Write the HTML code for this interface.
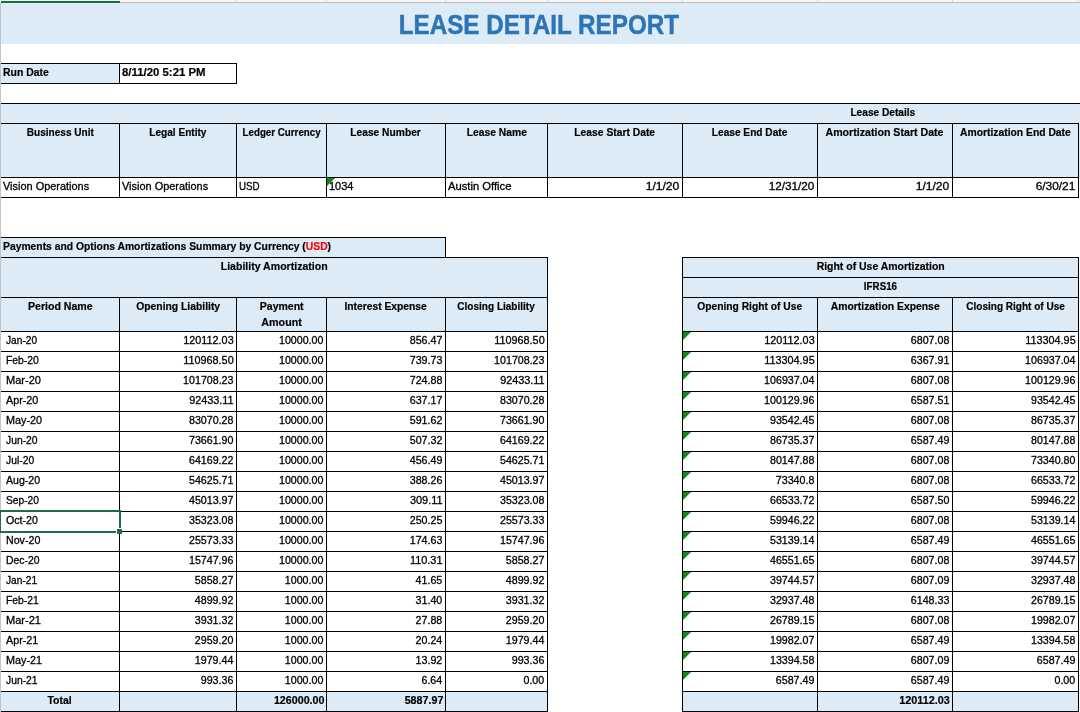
<!DOCTYPE html>
<html lang="en"><head><meta charset="utf-8"><title>Lease Detail Report</title>
<style>
html,body{margin:0;padding:0;background:#fff}
body{width:1080px;height:712px;overflow:hidden;position:relative;font-family:"Liberation Sans",sans-serif;font-size:10.9px;line-height:20px;color:#000}
.r{position:absolute}
#tx{position:absolute;left:0;top:0;width:1080px;height:712px;will-change:transform}
.t{position:absolute;height:20px;white-space:pre;overflow:visible;-webkit-text-stroke-width:0.3px}
.t.b{-webkit-text-stroke-width:0.2px}
.t span{display:inline-block}
.l{text-align:left}.l span{transform-origin:0 50%}
.c{text-align:center}.c span{transform-origin:50% 50%}
.g{text-align:right}.g span{transform-origin:100% 50%}
.b{font-weight:700}
.tri{position:absolute;width:0;height:0;border-top:8px solid #0f8a12;border-right:8px solid transparent}
</style></head><body>

<div class="r" style="left:0px;top:0px;width:1080px;height:3px;background:#f6f6f6"></div>
<div class="r" style="left:120px;top:2px;width:960px;height:1px;background:#bdbdbd"></div>
<div class="r" style="left:236px;top:0px;width:1px;height:2px;background:#d4d4d4"></div>
<div class="r" style="left:326px;top:0px;width:1px;height:2px;background:#d4d4d4"></div>
<div class="r" style="left:445px;top:0px;width:1px;height:2px;background:#d4d4d4"></div>
<div class="r" style="left:547px;top:0px;width:1px;height:2px;background:#d4d4d4"></div>
<div class="r" style="left:682px;top:0px;width:1px;height:2px;background:#d4d4d4"></div>
<div class="r" style="left:817px;top:0px;width:1px;height:2px;background:#d4d4d4"></div>
<div class="r" style="left:952px;top:0px;width:1px;height:2px;background:#d4d4d4"></div>
<div class="r" style="left:1078px;top:0px;width:1px;height:2px;background:#d4d4d4"></div>
<div class="r" style="left:1px;top:1px;width:119px;height:2px;background:#1f6b43"></div>
<div class="r" style="left:0px;top:3px;width:1px;height:709px;background:#c4c4c4"></div>
<div class="r" style="left:1px;top:3px;width:1079px;height:41px;background:#DDEBF7"></div>
<div class="r" style="left:1px;top:64px;width:118px;height:19px;background:#DDEBF7"></div>
<div class="r" style="left:1px;top:104px;width:1079px;height:73px;background:#DDEBF7"></div>
<div class="r" style="left:1px;top:238px;width:444px;height:19px;background:#DDEBF7"></div>
<div class="r" style="left:1px;top:258px;width:546px;height:73px;background:#DDEBF7"></div>
<div class="r" style="left:683px;top:258px;width:395px;height:73px;background:#DDEBF7"></div>
<div class="r" style="left:1px;top:692px;width:546px;height:19px;background:#DDEBF7"></div>
<div class="r" style="left:683px;top:692px;width:395px;height:19px;background:#DDEBF7"></div>
<div class="r" style="left:1px;top:63px;width:236px;height:1px;background:#000"></div>
<div class="r" style="left:1px;top:83px;width:236px;height:1px;background:#000"></div>
<div class="r" style="left:119px;top:63px;width:1px;height:21px;background:#000"></div>
<div class="r" style="left:236px;top:63px;width:1px;height:21px;background:#000"></div>
<div class="r" style="left:1px;top:103px;width:1079px;height:1px;background:#000"></div>
<div class="r" style="left:1px;top:123px;width:1078px;height:1px;background:#000"></div>
<div class="r" style="left:1px;top:177px;width:1078px;height:1px;background:#000"></div>
<div class="r" style="left:1px;top:197px;width:1078px;height:1px;background:#000"></div>
<div class="r" style="left:119px;top:123px;width:1px;height:75px;background:#000"></div>
<div class="r" style="left:236px;top:123px;width:1px;height:75px;background:#000"></div>
<div class="r" style="left:326px;top:123px;width:1px;height:75px;background:#000"></div>
<div class="r" style="left:445px;top:123px;width:1px;height:75px;background:#000"></div>
<div class="r" style="left:547px;top:123px;width:1px;height:75px;background:#000"></div>
<div class="r" style="left:682px;top:123px;width:1px;height:75px;background:#000"></div>
<div class="r" style="left:817px;top:123px;width:1px;height:75px;background:#000"></div>
<div class="r" style="left:952px;top:123px;width:1px;height:75px;background:#000"></div>
<div class="r" style="left:1078px;top:123px;width:1px;height:75px;background:#000"></div>
<div class="r" style="left:1px;top:237px;width:445px;height:1px;background:#000"></div>
<div class="r" style="left:445px;top:237px;width:1px;height:21px;background:#000"></div>
<div class="r" style="left:1px;top:257px;width:547px;height:1px;background:#000"></div>
<div class="r" style="left:547px;top:257px;width:1px;height:455px;background:#000"></div>
<div class="r" style="left:1px;top:297px;width:547px;height:1px;background:#000"></div>
<div class="r" style="left:1px;top:331px;width:547px;height:1px;background:#000"></div>
<div class="r" style="left:1px;top:351px;width:547px;height:1px;background:#000"></div>
<div class="r" style="left:1px;top:371px;width:547px;height:1px;background:#000"></div>
<div class="r" style="left:1px;top:391px;width:547px;height:1px;background:#000"></div>
<div class="r" style="left:1px;top:411px;width:547px;height:1px;background:#000"></div>
<div class="r" style="left:1px;top:431px;width:547px;height:1px;background:#000"></div>
<div class="r" style="left:1px;top:451px;width:547px;height:1px;background:#000"></div>
<div class="r" style="left:1px;top:471px;width:547px;height:1px;background:#000"></div>
<div class="r" style="left:1px;top:491px;width:547px;height:1px;background:#000"></div>
<div class="r" style="left:1px;top:511px;width:547px;height:1px;background:#000"></div>
<div class="r" style="left:1px;top:531px;width:547px;height:1px;background:#000"></div>
<div class="r" style="left:1px;top:551px;width:547px;height:1px;background:#000"></div>
<div class="r" style="left:1px;top:571px;width:547px;height:1px;background:#000"></div>
<div class="r" style="left:1px;top:591px;width:547px;height:1px;background:#000"></div>
<div class="r" style="left:1px;top:611px;width:547px;height:1px;background:#000"></div>
<div class="r" style="left:1px;top:631px;width:547px;height:1px;background:#000"></div>
<div class="r" style="left:1px;top:651px;width:547px;height:1px;background:#000"></div>
<div class="r" style="left:1px;top:671px;width:547px;height:1px;background:#000"></div>
<div class="r" style="left:1px;top:691px;width:547px;height:1px;background:#000"></div>
<div class="r" style="left:1px;top:711px;width:547px;height:1px;background:#000"></div>
<div class="r" style="left:119px;top:297px;width:1px;height:415px;background:#000"></div>
<div class="r" style="left:236px;top:297px;width:1px;height:415px;background:#000"></div>
<div class="r" style="left:326px;top:297px;width:1px;height:415px;background:#000"></div>
<div class="r" style="left:445px;top:297px;width:1px;height:415px;background:#000"></div>
<div class="r" style="left:682px;top:257px;width:397px;height:1px;background:#000"></div>
<div class="r" style="left:682px;top:277px;width:397px;height:1px;background:#000"></div>
<div class="r" style="left:682px;top:297px;width:397px;height:1px;background:#000"></div>
<div class="r" style="left:682px;top:331px;width:397px;height:1px;background:#000"></div>
<div class="r" style="left:682px;top:351px;width:397px;height:1px;background:#000"></div>
<div class="r" style="left:682px;top:371px;width:397px;height:1px;background:#000"></div>
<div class="r" style="left:682px;top:391px;width:397px;height:1px;background:#000"></div>
<div class="r" style="left:682px;top:411px;width:397px;height:1px;background:#000"></div>
<div class="r" style="left:682px;top:431px;width:397px;height:1px;background:#000"></div>
<div class="r" style="left:682px;top:451px;width:397px;height:1px;background:#000"></div>
<div class="r" style="left:682px;top:471px;width:397px;height:1px;background:#000"></div>
<div class="r" style="left:682px;top:491px;width:397px;height:1px;background:#000"></div>
<div class="r" style="left:682px;top:511px;width:397px;height:1px;background:#000"></div>
<div class="r" style="left:682px;top:531px;width:397px;height:1px;background:#000"></div>
<div class="r" style="left:682px;top:551px;width:397px;height:1px;background:#000"></div>
<div class="r" style="left:682px;top:571px;width:397px;height:1px;background:#000"></div>
<div class="r" style="left:682px;top:591px;width:397px;height:1px;background:#000"></div>
<div class="r" style="left:682px;top:611px;width:397px;height:1px;background:#000"></div>
<div class="r" style="left:682px;top:631px;width:397px;height:1px;background:#000"></div>
<div class="r" style="left:682px;top:651px;width:397px;height:1px;background:#000"></div>
<div class="r" style="left:682px;top:671px;width:397px;height:1px;background:#000"></div>
<div class="r" style="left:682px;top:691px;width:397px;height:1px;background:#000"></div>
<div class="r" style="left:682px;top:711px;width:397px;height:1px;background:#000"></div>
<div class="r" style="left:682px;top:257px;width:1px;height:455px;background:#000"></div>
<div class="r" style="left:1078px;top:257px;width:1px;height:455px;background:#000"></div>
<div class="r" style="left:817px;top:297px;width:1px;height:415px;background:#000"></div>
<div class="r" style="left:952px;top:297px;width:1px;height:415px;background:#000"></div>


<div class="tri" style="left:327px;top:178px"></div>
<div class="tri" style="left:683px;top:332px"></div>
<div class="tri" style="left:683px;top:352px"></div>
<div class="tri" style="left:683px;top:372px"></div>
<div class="tri" style="left:683px;top:392px"></div>
<div class="tri" style="left:683px;top:412px"></div>
<div class="tri" style="left:683px;top:432px"></div>
<div class="tri" style="left:683px;top:452px"></div>
<div class="tri" style="left:683px;top:472px"></div>
<div class="tri" style="left:683px;top:492px"></div>
<div class="tri" style="left:683px;top:512px"></div>
<div class="tri" style="left:683px;top:532px"></div>
<div class="tri" style="left:683px;top:552px"></div>
<div class="tri" style="left:683px;top:572px"></div>
<div class="tri" style="left:683px;top:592px"></div>
<div class="tri" style="left:683px;top:612px"></div>
<div class="tri" style="left:683px;top:632px"></div>
<div class="tri" style="left:683px;top:652px"></div>
<div class="tri" style="left:683px;top:672px"></div>


<div id="tx">
<div class="t c b" style="left:-0.7px;top:5.27px;width:1079.0px;-webkit-text-stroke-width:0.5px;font-size:27.8px;height:40px;line-height:40px;color:#2E75B6"><span style="transform:scaleX(0.8711)">LEASE DETAIL REPORT</span></div>
<div class="t l b" style="left:3.0px;top:62.22px;width:116.0px"><span style="transform:scaleX(0.9575)">Run Date</span></div>
<div class="t l b" style="left:122.0px;top:62.22px;width:114.0px"><span style="transform:scaleX(1.0458)">8/11/20 5:21 PM</span></div>
<div class="t c b" style="left:683.0px;top:102.22px;width:400.0px"><span style="transform:scaleX(0.9302)">Lease Details</span></div>
<div class="t c b" style="left:1.0px;top:122.22px;width:118.0px"><span style="transform:scaleX(0.9234)">Business Unit</span></div>
<div class="t c b" style="left:120.0px;top:122.22px;width:116.0px"><span style="transform:scaleX(0.9271)">Legal Entity</span></div>
<div class="t c b" style="left:237.0px;top:122.22px;width:89.0px"><span style="transform:scaleX(0.8961)">Ledger Currency</span></div>
<div class="t c b" style="left:327.0px;top:122.22px;width:118.0px"><span style="transform:scaleX(0.9403)">Lease Number</span></div>
<div class="t c b" style="left:446.0px;top:122.22px;width:101.0px"><span style="transform:scaleX(0.9472)">Lease Name</span></div>
<div class="t c b" style="left:548.0px;top:122.22px;width:134.0px"><span style="transform:scaleX(0.9465)">Lease Start Date</span></div>
<div class="t c b" style="left:683.0px;top:122.22px;width:134.0px"><span style="transform:scaleX(0.9305)">Lease End Date</span></div>
<div class="t c b" style="left:818.0px;top:122.22px;width:134.0px"><span style="transform:scaleX(0.9753)">Amortization Start Date</span></div>
<div class="t c b" style="left:953.0px;top:122.22px;width:125.0px"><span style="transform:scaleX(0.9488)">Amortization End Date</span></div>
<div class="t l" style="left:3.0px;top:176.22px;width:116.0px"><span style="transform:scaleX(1.0047)">Vision Operations</span></div>
<div class="t l" style="left:122.0px;top:176.22px;width:114.0px"><span style="transform:scaleX(1.0047)">Vision Operations</span></div>
<div class="t l" style="left:239.0px;top:176.22px;width:87.0px"><span style="transform:scaleX(0.8961)">USD</span></div>
<div class="t l" style="left:329.0px;top:176.22px;width:116.0px"><span style="transform:scaleX(1.0039)">1034</span></div>
<div class="t l" style="left:448.0px;top:176.22px;width:99.0px"><span style="transform:scaleX(1.0309)">Austin Office</span></div>
<div class="t g" style="left:548.0px;top:176.22px;width:131.6px"><span style="transform:scaleX(1.1099)">1/1/20</span></div>
<div class="t g" style="left:683.0px;top:176.22px;width:131.6px"><span style="transform:scaleX(1.0792)">12/31/20</span></div>
<div class="t g" style="left:818.0px;top:176.22px;width:131.6px"><span style="transform:scaleX(1.1099)">1/1/20</span></div>
<div class="t g" style="left:953.0px;top:176.22px;width:122.6px"><span style="transform:scaleX(1.0920)">6/30/21</span></div>
<div class="t l b" style="left:3.0px;top:236.22px;width:442.0px"><span style="transform:scaleX(0.9488)">Payments and Options Amortizations Summary by Currency (<i style="font-style:normal;color:#FF0000">USD</i>)</span></div>
<div class="t c b" style="left:1.0px;top:256.22px;width:546.0px"><span style="transform:scaleX(0.9690)">Liability Amortization</span></div>
<div class="t c b" style="left:683.0px;top:256.22px;width:395.0px"><span style="transform:scaleX(0.9606)">Right of Use Amortization</span></div>
<div class="t c b" style="left:683.0px;top:276.22px;width:395.0px"><span style="transform:scaleX(0.8989)">IFRS16</span></div>
<div class="t c b" style="left:1.0px;top:296.22px;width:118.0px"><span style="transform:scaleX(0.9716)">Period Name</span></div>
<div class="t c b" style="left:120.0px;top:296.22px;width:116.0px"><span style="transform:scaleX(0.9498)">Opening Liability</span></div>
<div class="t c b" style="left:237.0px;top:296.22px;width:89.0px"><span style="transform:scaleX(0.9656)">Payment</span></div>
<div class="t c b" style="left:327.0px;top:296.22px;width:118.0px"><span style="transform:scaleX(0.9453)">Interest Expense</span></div>
<div class="t c b" style="left:446.0px;top:296.22px;width:101.0px"><span style="transform:scaleX(0.9203)">Closing Liability</span></div>
<div class="t c b" style="left:237.0px;top:312.22px;width:89.0px"><span style="transform:scaleX(0.9825)">Amount</span></div>
<div class="t c b" style="left:683.0px;top:296.22px;width:134.0px"><span style="transform:scaleX(0.9436)">Opening Right of Use</span></div>
<div class="t c b" style="left:818.0px;top:296.22px;width:134.0px"><span style="transform:scaleX(0.9526)">Amortization Expense</span></div>
<div class="t c b" style="left:953.0px;top:296.22px;width:125.0px"><span style="transform:scaleX(0.9202)">Closing Right of Use</span></div>
<div class="t l" style="left:5.8px;top:330.22px;width:113.2px"><span style="transform:scaleX(0.9331)">Jan-20</span></div>
<div class="t g" style="left:120.0px;top:330.22px;width:113.6px"><span style="transform:scaleX(0.9945)">120112.03</span></div>
<div class="t g" style="left:237.0px;top:330.22px;width:86.6px"><span style="transform:scaleX(0.9787)">10000.00</span></div>
<div class="t g" style="left:327.0px;top:330.22px;width:115.6px"><span style="transform:scaleX(0.9791)">856.47</span></div>
<div class="t g" style="left:446.0px;top:330.22px;width:98.6px"><span style="transform:scaleX(0.9945)">110968.50</span></div>
<div class="t g" style="left:683.0px;top:330.22px;width:131.6px"><span style="transform:scaleX(0.9945)">120112.03</span></div>
<div class="t g" style="left:818.0px;top:330.22px;width:131.6px"><span style="transform:scaleX(0.9789)">6807.08</span></div>
<div class="t g" style="left:953.0px;top:330.22px;width:122.6px"><span style="transform:scaleX(0.9945)">113304.95</span></div>
<div class="t l" style="left:5.8px;top:350.22px;width:113.2px"><span style="transform:scaleX(0.9498)">Feb-20</span></div>
<div class="t g" style="left:120.0px;top:350.22px;width:113.6px"><span style="transform:scaleX(0.9945)">110968.50</span></div>
<div class="t g" style="left:237.0px;top:350.22px;width:86.6px"><span style="transform:scaleX(0.9787)">10000.00</span></div>
<div class="t g" style="left:327.0px;top:350.22px;width:115.6px"><span style="transform:scaleX(0.9791)">739.73</span></div>
<div class="t g" style="left:446.0px;top:350.22px;width:98.6px"><span style="transform:scaleX(0.9788)">101708.23</span></div>
<div class="t g" style="left:683.0px;top:350.22px;width:131.6px"><span style="transform:scaleX(0.9945)">113304.95</span></div>
<div class="t g" style="left:818.0px;top:350.22px;width:131.6px"><span style="transform:scaleX(0.9789)">6367.91</span></div>
<div class="t g" style="left:953.0px;top:350.22px;width:122.6px"><span style="transform:scaleX(0.9788)">106937.04</span></div>
<div class="t l" style="left:5.8px;top:370.22px;width:113.2px"><span style="transform:scaleX(1.0137)">Mar-20</span></div>
<div class="t g" style="left:120.0px;top:370.22px;width:113.6px"><span style="transform:scaleX(0.9788)">101708.23</span></div>
<div class="t g" style="left:237.0px;top:370.22px;width:86.6px"><span style="transform:scaleX(0.9787)">10000.00</span></div>
<div class="t g" style="left:327.0px;top:370.22px;width:115.6px"><span style="transform:scaleX(0.9791)">724.88</span></div>
<div class="t g" style="left:446.0px;top:370.22px;width:98.6px"><span style="transform:scaleX(0.9965)">92433.11</span></div>
<div class="t g" style="left:683.0px;top:370.22px;width:131.6px"><span style="transform:scaleX(0.9788)">106937.04</span></div>
<div class="t g" style="left:818.0px;top:370.22px;width:131.6px"><span style="transform:scaleX(0.9789)">6807.08</span></div>
<div class="t g" style="left:953.0px;top:370.22px;width:122.6px"><span style="transform:scaleX(0.9788)">100129.96</span></div>
<div class="t l" style="left:5.8px;top:390.22px;width:113.2px"><span style="transform:scaleX(0.9866)">Apr-20</span></div>
<div class="t g" style="left:120.0px;top:390.22px;width:113.6px"><span style="transform:scaleX(0.9965)">92433.11</span></div>
<div class="t g" style="left:237.0px;top:390.22px;width:86.6px"><span style="transform:scaleX(0.9787)">10000.00</span></div>
<div class="t g" style="left:327.0px;top:390.22px;width:115.6px"><span style="transform:scaleX(0.9791)">637.17</span></div>
<div class="t g" style="left:446.0px;top:390.22px;width:98.6px"><span style="transform:scaleX(0.9787)">83070.28</span></div>
<div class="t g" style="left:683.0px;top:390.22px;width:131.6px"><span style="transform:scaleX(0.9788)">100129.96</span></div>
<div class="t g" style="left:818.0px;top:390.22px;width:131.6px"><span style="transform:scaleX(0.9789)">6587.51</span></div>
<div class="t g" style="left:953.0px;top:390.22px;width:122.6px"><span style="transform:scaleX(0.9787)">93542.45</span></div>
<div class="t l" style="left:5.8px;top:410.22px;width:113.2px"><span style="transform:scaleX(0.9926)">May-20</span></div>
<div class="t g" style="left:120.0px;top:410.22px;width:113.6px"><span style="transform:scaleX(0.9787)">83070.28</span></div>
<div class="t g" style="left:237.0px;top:410.22px;width:86.6px"><span style="transform:scaleX(0.9787)">10000.00</span></div>
<div class="t g" style="left:327.0px;top:410.22px;width:115.6px"><span style="transform:scaleX(0.9791)">591.62</span></div>
<div class="t g" style="left:446.0px;top:410.22px;width:98.6px"><span style="transform:scaleX(0.9787)">73661.90</span></div>
<div class="t g" style="left:683.0px;top:410.22px;width:131.6px"><span style="transform:scaleX(0.9787)">93542.45</span></div>
<div class="t g" style="left:818.0px;top:410.22px;width:131.6px"><span style="transform:scaleX(0.9789)">6807.08</span></div>
<div class="t g" style="left:953.0px;top:410.22px;width:122.6px"><span style="transform:scaleX(0.9787)">86735.37</span></div>
<div class="t l" style="left:5.8px;top:430.22px;width:113.2px"><span style="transform:scaleX(0.9497)">Jun-20</span></div>
<div class="t g" style="left:120.0px;top:430.22px;width:113.6px"><span style="transform:scaleX(0.9787)">73661.90</span></div>
<div class="t g" style="left:237.0px;top:430.22px;width:86.6px"><span style="transform:scaleX(0.9787)">10000.00</span></div>
<div class="t g" style="left:327.0px;top:430.22px;width:115.6px"><span style="transform:scaleX(0.9791)">507.32</span></div>
<div class="t g" style="left:446.0px;top:430.22px;width:98.6px"><span style="transform:scaleX(0.9787)">64169.22</span></div>
<div class="t g" style="left:683.0px;top:430.22px;width:131.6px"><span style="transform:scaleX(0.9787)">86735.37</span></div>
<div class="t g" style="left:818.0px;top:430.22px;width:131.6px"><span style="transform:scaleX(0.9789)">6587.49</span></div>
<div class="t g" style="left:953.0px;top:430.22px;width:122.6px"><span style="transform:scaleX(0.9787)">80147.88</span></div>
<div class="t l" style="left:5.8px;top:450.22px;width:113.2px"><span style="transform:scaleX(0.9490)">Jul-20</span></div>
<div class="t g" style="left:120.0px;top:450.22px;width:113.6px"><span style="transform:scaleX(0.9787)">64169.22</span></div>
<div class="t g" style="left:237.0px;top:450.22px;width:86.6px"><span style="transform:scaleX(0.9787)">10000.00</span></div>
<div class="t g" style="left:327.0px;top:450.22px;width:115.6px"><span style="transform:scaleX(0.9791)">456.49</span></div>
<div class="t g" style="left:446.0px;top:450.22px;width:98.6px"><span style="transform:scaleX(0.9787)">54625.71</span></div>
<div class="t g" style="left:683.0px;top:450.22px;width:131.6px"><span style="transform:scaleX(0.9787)">80147.88</span></div>
<div class="t g" style="left:818.0px;top:450.22px;width:131.6px"><span style="transform:scaleX(0.9789)">6807.08</span></div>
<div class="t g" style="left:953.0px;top:450.22px;width:122.6px"><span style="transform:scaleX(0.9787)">73340.80</span></div>
<div class="t l" style="left:5.8px;top:470.22px;width:113.2px"><span style="transform:scaleX(0.9691)">Aug-20</span></div>
<div class="t g" style="left:120.0px;top:470.22px;width:113.6px"><span style="transform:scaleX(0.9787)">54625.71</span></div>
<div class="t g" style="left:237.0px;top:470.22px;width:86.6px"><span style="transform:scaleX(0.9787)">10000.00</span></div>
<div class="t g" style="left:327.0px;top:470.22px;width:115.6px"><span style="transform:scaleX(0.9791)">388.26</span></div>
<div class="t g" style="left:446.0px;top:470.22px;width:98.6px"><span style="transform:scaleX(0.9787)">45013.97</span></div>
<div class="t g" style="left:683.0px;top:470.22px;width:131.6px"><span style="transform:scaleX(0.9789)">73340.8</span></div>
<div class="t g" style="left:818.0px;top:470.22px;width:131.6px"><span style="transform:scaleX(0.9789)">6807.08</span></div>
<div class="t g" style="left:953.0px;top:470.22px;width:122.6px"><span style="transform:scaleX(0.9787)">66533.72</span></div>
<div class="t l" style="left:5.8px;top:490.22px;width:113.2px"><span style="transform:scaleX(0.9386)">Sep-20</span></div>
<div class="t g" style="left:120.0px;top:490.22px;width:113.6px"><span style="transform:scaleX(0.9787)">45013.97</span></div>
<div class="t g" style="left:237.0px;top:490.22px;width:86.6px"><span style="transform:scaleX(0.9787)">10000.00</span></div>
<div class="t g" style="left:327.0px;top:490.22px;width:115.6px"><span style="transform:scaleX(1.0031)">309.11</span></div>
<div class="t g" style="left:446.0px;top:490.22px;width:98.6px"><span style="transform:scaleX(0.9787)">35323.08</span></div>
<div class="t g" style="left:683.0px;top:490.22px;width:131.6px"><span style="transform:scaleX(0.9787)">66533.72</span></div>
<div class="t g" style="left:818.0px;top:490.22px;width:131.6px"><span style="transform:scaleX(0.9789)">6587.50</span></div>
<div class="t g" style="left:953.0px;top:490.22px;width:122.6px"><span style="transform:scaleX(0.9787)">59946.22</span></div>
<div class="t l" style="left:5.8px;top:510.22px;width:113.2px"><span style="transform:scaleX(0.9748)">Oct-20</span></div>
<div class="t g" style="left:120.0px;top:510.22px;width:113.6px"><span style="transform:scaleX(0.9787)">35323.08</span></div>
<div class="t g" style="left:237.0px;top:510.22px;width:86.6px"><span style="transform:scaleX(0.9787)">10000.00</span></div>
<div class="t g" style="left:327.0px;top:510.22px;width:115.6px"><span style="transform:scaleX(0.9791)">250.25</span></div>
<div class="t g" style="left:446.0px;top:510.22px;width:98.6px"><span style="transform:scaleX(0.9787)">25573.33</span></div>
<div class="t g" style="left:683.0px;top:510.22px;width:131.6px"><span style="transform:scaleX(0.9787)">59946.22</span></div>
<div class="t g" style="left:818.0px;top:510.22px;width:131.6px"><span style="transform:scaleX(0.9789)">6807.08</span></div>
<div class="t g" style="left:953.0px;top:510.22px;width:122.6px"><span style="transform:scaleX(0.9787)">53139.14</span></div>
<div class="t l" style="left:5.8px;top:530.22px;width:113.2px"><span style="transform:scaleX(0.9774)">Nov-20</span></div>
<div class="t g" style="left:120.0px;top:530.22px;width:113.6px"><span style="transform:scaleX(0.9787)">25573.33</span></div>
<div class="t g" style="left:237.0px;top:530.22px;width:86.6px"><span style="transform:scaleX(0.9787)">10000.00</span></div>
<div class="t g" style="left:327.0px;top:530.22px;width:115.6px"><span style="transform:scaleX(0.9791)">174.63</span></div>
<div class="t g" style="left:446.0px;top:530.22px;width:98.6px"><span style="transform:scaleX(0.9787)">15747.96</span></div>
<div class="t g" style="left:683.0px;top:530.22px;width:131.6px"><span style="transform:scaleX(0.9787)">53139.14</span></div>
<div class="t g" style="left:818.0px;top:530.22px;width:131.6px"><span style="transform:scaleX(0.9789)">6587.49</span></div>
<div class="t g" style="left:953.0px;top:530.22px;width:122.6px"><span style="transform:scaleX(0.9787)">46551.65</span></div>
<div class="t l" style="left:5.8px;top:550.22px;width:113.2px"><span style="transform:scaleX(0.9564)">Dec-20</span></div>
<div class="t g" style="left:120.0px;top:550.22px;width:113.6px"><span style="transform:scaleX(0.9787)">15747.96</span></div>
<div class="t g" style="left:237.0px;top:550.22px;width:86.6px"><span style="transform:scaleX(0.9787)">10000.00</span></div>
<div class="t g" style="left:327.0px;top:550.22px;width:115.6px"><span style="transform:scaleX(1.0031)">110.31</span></div>
<div class="t g" style="left:446.0px;top:550.22px;width:98.6px"><span style="transform:scaleX(0.9789)">5858.27</span></div>
<div class="t g" style="left:683.0px;top:550.22px;width:131.6px"><span style="transform:scaleX(0.9787)">46551.65</span></div>
<div class="t g" style="left:818.0px;top:550.22px;width:131.6px"><span style="transform:scaleX(0.9789)">6807.08</span></div>
<div class="t g" style="left:953.0px;top:550.22px;width:122.6px"><span style="transform:scaleX(0.9787)">39744.57</span></div>
<div class="t l" style="left:5.8px;top:570.22px;width:113.2px"><span style="transform:scaleX(0.9331)">Jan-21</span></div>
<div class="t g" style="left:120.0px;top:570.22px;width:113.6px"><span style="transform:scaleX(0.9789)">5858.27</span></div>
<div class="t g" style="left:237.0px;top:570.22px;width:86.6px"><span style="transform:scaleX(0.9789)">1000.00</span></div>
<div class="t g" style="left:327.0px;top:570.22px;width:115.6px"><span style="transform:scaleX(0.9784)">41.65</span></div>
<div class="t g" style="left:446.0px;top:570.22px;width:98.6px"><span style="transform:scaleX(0.9789)">4899.92</span></div>
<div class="t g" style="left:683.0px;top:570.22px;width:131.6px"><span style="transform:scaleX(0.9787)">39744.57</span></div>
<div class="t g" style="left:818.0px;top:570.22px;width:131.6px"><span style="transform:scaleX(0.9789)">6807.09</span></div>
<div class="t g" style="left:953.0px;top:570.22px;width:122.6px"><span style="transform:scaleX(0.9787)">32937.48</span></div>
<div class="t l" style="left:5.8px;top:590.22px;width:113.2px"><span style="transform:scaleX(0.9498)">Feb-21</span></div>
<div class="t g" style="left:120.0px;top:590.22px;width:113.6px"><span style="transform:scaleX(0.9789)">4899.92</span></div>
<div class="t g" style="left:237.0px;top:590.22px;width:86.6px"><span style="transform:scaleX(0.9789)">1000.00</span></div>
<div class="t g" style="left:327.0px;top:590.22px;width:115.6px"><span style="transform:scaleX(0.9784)">31.40</span></div>
<div class="t g" style="left:446.0px;top:590.22px;width:98.6px"><span style="transform:scaleX(0.9789)">3931.32</span></div>
<div class="t g" style="left:683.0px;top:590.22px;width:131.6px"><span style="transform:scaleX(0.9787)">32937.48</span></div>
<div class="t g" style="left:818.0px;top:590.22px;width:131.6px"><span style="transform:scaleX(0.9789)">6148.33</span></div>
<div class="t g" style="left:953.0px;top:590.22px;width:122.6px"><span style="transform:scaleX(0.9787)">26789.15</span></div>
<div class="t l" style="left:5.8px;top:610.22px;width:113.2px"><span style="transform:scaleX(1.0137)">Mar-21</span></div>
<div class="t g" style="left:120.0px;top:610.22px;width:113.6px"><span style="transform:scaleX(0.9789)">3931.32</span></div>
<div class="t g" style="left:237.0px;top:610.22px;width:86.6px"><span style="transform:scaleX(0.9789)">1000.00</span></div>
<div class="t g" style="left:327.0px;top:610.22px;width:115.6px"><span style="transform:scaleX(0.9784)">27.88</span></div>
<div class="t g" style="left:446.0px;top:610.22px;width:98.6px"><span style="transform:scaleX(0.9789)">2959.20</span></div>
<div class="t g" style="left:683.0px;top:610.22px;width:131.6px"><span style="transform:scaleX(0.9787)">26789.15</span></div>
<div class="t g" style="left:818.0px;top:610.22px;width:131.6px"><span style="transform:scaleX(0.9789)">6807.08</span></div>
<div class="t g" style="left:953.0px;top:610.22px;width:122.6px"><span style="transform:scaleX(0.9787)">19982.07</span></div>
<div class="t l" style="left:5.8px;top:630.22px;width:113.2px"><span style="transform:scaleX(0.9866)">Apr-21</span></div>
<div class="t g" style="left:120.0px;top:630.22px;width:113.6px"><span style="transform:scaleX(0.9789)">2959.20</span></div>
<div class="t g" style="left:237.0px;top:630.22px;width:86.6px"><span style="transform:scaleX(0.9789)">1000.00</span></div>
<div class="t g" style="left:327.0px;top:630.22px;width:115.6px"><span style="transform:scaleX(0.9784)">20.24</span></div>
<div class="t g" style="left:446.0px;top:630.22px;width:98.6px"><span style="transform:scaleX(0.9789)">1979.44</span></div>
<div class="t g" style="left:683.0px;top:630.22px;width:131.6px"><span style="transform:scaleX(0.9787)">19982.07</span></div>
<div class="t g" style="left:818.0px;top:630.22px;width:131.6px"><span style="transform:scaleX(0.9789)">6587.49</span></div>
<div class="t g" style="left:953.0px;top:630.22px;width:122.6px"><span style="transform:scaleX(0.9787)">13394.58</span></div>
<div class="t l" style="left:5.8px;top:650.22px;width:113.2px"><span style="transform:scaleX(0.9926)">May-21</span></div>
<div class="t g" style="left:120.0px;top:650.22px;width:113.6px"><span style="transform:scaleX(0.9789)">1979.44</span></div>
<div class="t g" style="left:237.0px;top:650.22px;width:86.6px"><span style="transform:scaleX(0.9789)">1000.00</span></div>
<div class="t g" style="left:327.0px;top:650.22px;width:115.6px"><span style="transform:scaleX(0.9784)">13.92</span></div>
<div class="t g" style="left:446.0px;top:650.22px;width:98.6px"><span style="transform:scaleX(0.9791)">993.36</span></div>
<div class="t g" style="left:683.0px;top:650.22px;width:131.6px"><span style="transform:scaleX(0.9787)">13394.58</span></div>
<div class="t g" style="left:818.0px;top:650.22px;width:131.6px"><span style="transform:scaleX(0.9789)">6807.09</span></div>
<div class="t g" style="left:953.0px;top:650.22px;width:122.6px"><span style="transform:scaleX(0.9789)">6587.49</span></div>
<div class="t l" style="left:5.8px;top:670.22px;width:113.2px"><span style="transform:scaleX(0.9497)">Jun-21</span></div>
<div class="t g" style="left:120.0px;top:670.22px;width:113.6px"><span style="transform:scaleX(0.9791)">993.36</span></div>
<div class="t g" style="left:237.0px;top:670.22px;width:86.6px"><span style="transform:scaleX(0.9789)">1000.00</span></div>
<div class="t g" style="left:327.0px;top:670.22px;width:115.6px"><span style="transform:scaleX(0.9786)">6.64</span></div>
<div class="t g" style="left:446.0px;top:670.22px;width:98.6px"><span style="transform:scaleX(0.9786)">0.00</span></div>
<div class="t g" style="left:683.0px;top:670.22px;width:131.6px"><span style="transform:scaleX(0.9789)">6587.49</span></div>
<div class="t g" style="left:818.0px;top:670.22px;width:131.6px"><span style="transform:scaleX(0.9789)">6587.49</span></div>
<div class="t g" style="left:953.0px;top:670.22px;width:122.6px"><span style="transform:scaleX(0.9786)">0.00</span></div>
<div class="t c b" style="left:1.0px;top:690.22px;width:118.0px"><span style="transform:scaleX(0.9628)">Total</span></div>
<div class="t g b" style="left:237.4px;top:690.22px;width:86.6px"><span style="transform:scaleX(0.9824)">126000.00</span></div>
<div class="t g b" style="left:327.4px;top:690.22px;width:115.6px"><span style="transform:scaleX(0.9831)">5887.97</span></div>
<div class="t g b" style="left:818.4px;top:690.22px;width:131.6px"><span style="transform:scaleX(0.9939)">120112.03</span></div>
</div>

<div class="r" style="left:-1px;top:510px;width:118px;height:19px;border:2px solid #1f6b43"></div>
<div class="r" style="left:116px;top:528px;width:5px;height:5px;background:#1f6b43;border-left:1px solid #fff;border-top:1px solid #fff"></div>

</body></html>
